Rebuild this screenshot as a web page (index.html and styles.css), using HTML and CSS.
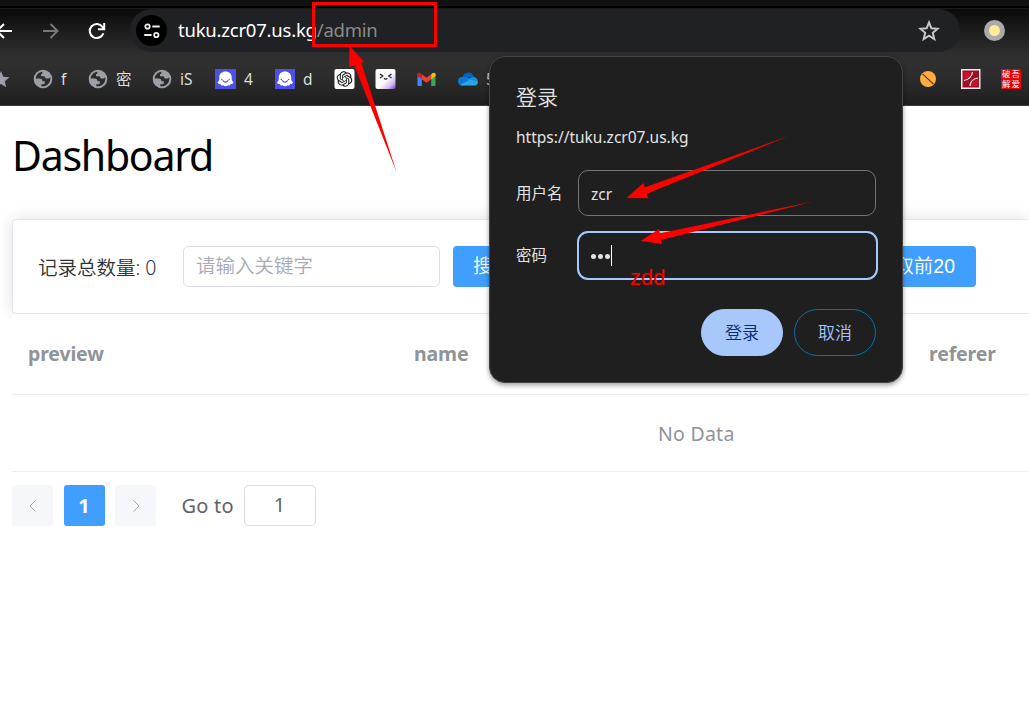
FILE: index.html
```html
<!DOCTYPE html>
<html lang="zh-CN">
<head>
<meta charset="utf-8">
<title>Dashboard</title>
<link rel="stylesheet" href="styles.css">
</head>
<body>
<svg class="defs" width="0" height="0">
  <symbol id="globe" viewBox="0 0 20 20">
    <circle cx="10" cy="10" r="9.3" fill="#9aa0a6"/>
    <path d="M9.500 2.700C5.500 3 3 6 2.700 9.600H6.500Q9.500 9.600 9.500 12.300H11.800V14.200Q11.800 15.200 10 15.200H8.300V17.200C13.500 18 17.300 14.200 17.300 10V8.200L15.800 9.500 12.800 9.500 11.500 7.300H8V5.200Q9.500 5.200 9.500 2.700Z" fill="#2c2c2c"/>
  </symbol>
  <symbol id="ghost" viewBox="0 0 20 20">
    <rect width="20" height="20" fill="#4d50e6"/>
    <path d="M10 2.6C6.4 2.6 3.8 5 3.8 8.2V11L2 13.5Q2.8 15.5 4.8 14.7 5.1 17.3 7.5 16.2 10 18.5 12.5 16.2 14.9 17.3 15.2 14.7 17.2 15.5 18 13.5L16.2 11V8.2C16.2 5 13.6 2.6 10 2.6Z" fill="#fff"/>
    <path d="M7.2 11.3Q10 15 12.8 11.3" fill="none" stroke="#4d50e6" stroke-width="1.1"/>
    <circle cx="6.3" cy="10.5" r=".7" fill="#4d50e6"/><circle cx="13.7" cy="10.5" r=".7" fill="#4d50e6"/>
  </symbol>
</svg>
<header class="browser">
  <div class="tabstrip"></div>
  <div class="toolbar">
    <svg class="nav back" viewBox="0 0 18 18"><path d="M17 9H2M9 2L2 9l7 7"/></svg>
    <svg class="nav forward" viewBox="0 0 18 18"><path d="M1 9h14M8.5 2l7 7-7 7"/></svg>
    <svg class="nav reload" viewBox="0 0 18 18"><path d="M15.4 11.2A7 7 0 1 1 14.5 5L16 7.2M16.2 1v6.2H10"/></svg>
    <div class="omnibox">
      <span class="site"><svg viewBox="0 0 18 18"><circle cx="4.5" cy="4.5" r="2.2"/><circle cx="13.3" cy="13" r="2.2"/><path d="M9.3 4.5h7.4M1.2 13h7.4"/></svg></span>
      <span class="url">tuku.zcr07.us.kg<span class="path">/admin</span></span>
      <svg class="fav" viewBox="0 0 22 22"><path d="M11 2.5l2.4 5.8 6.2.5-4.8 4 1.5 6.2L11 15.7 5.7 19l1.5-6.2-4.8-4 6.2-.5z"/></svg>
    </div>
    <span class="avatar"></span>
  </div>
  <nav class="bookmarks">
    <span class="bm"><svg class="star" viewBox="0 0 18 18"><path d="M9 1l2.3 5.7 6.2.5-4.7 4 1.4 6L9 14l-5.2 3.2 1.4-6-4.7-4 6.2-.5z" fill="#9aa0a6"/></svg></span>
    <span class="bm"><svg><use href="#globe"/></svg>f</span>
    <span class="bm"><svg><use href="#globe"/></svg>密</span>
    <span class="bm"><svg><use href="#globe"/></svg>iS</span>
    <span class="bm"><svg class="wide" viewBox="0 0 21 20"><rect width="21" height="20" fill="#4d50e6"/><use href="#ghost" width="21" height="20"/></svg>4</span>
    <span class="bm"><svg><use href="#ghost"/></svg>d</span>
    <span class="bm"><svg class="wide" viewBox="0 0 20 20"><rect width="20" height="20" rx="2" fill="#fff"/>
      <g transform="translate(2.2 2.2) scale(.65)"><path fill="#111" d="M22.28 9.82a5.98 5.98 0 0 0-.52-4.91 6.05 6.05 0 0 0-6.51-2.9A6.07 6.07 0 0 0 4.98 4.18a5.98 5.98 0 0 0-4 2.9 6.05 6.05 0 0 0 .74 7.1 5.98 5.98 0 0 0 .51 4.91 6.05 6.05 0 0 0 6.51 2.9A5.98 5.98 0 0 0 13.26 24a6.06 6.06 0 0 0 5.77-4.21 5.99 5.99 0 0 0 4-2.9 6.06 6.06 0 0 0-.75-7.07zm-9.02 12.61a4.48 4.48 0 0 1-2.88-1.04l.14-.08 4.78-2.76a.8.8 0 0 0 .39-.68v-6.74l2.02 1.17a.07.07 0 0 1 .04.05v5.58a4.5 4.5 0 0 1-4.49 4.5zM3.6 18.3a4.47 4.47 0 0 1-.53-3.01l.14.08 4.78 2.76a.77.77 0 0 0 .78 0l5.84-3.37v2.33a.08.08 0 0 1-.03.06L9.74 19.95A4.5 4.5 0 0 1 3.6 18.3zM2.34 7.9a4.49 4.49 0 0 1 2.37-1.97v5.68a.77.77 0 0 0 .38.67l5.82 3.36-2.02 1.17a.08.08 0 0 1-.07 0l-4.83-2.79A4.5 4.5 0 0 1 2.34 7.9zm16.6 3.85l-5.84-3.38 2.02-1.16a.08.08 0 0 1 .07 0l4.83 2.79a4.49 4.49 0 0 1-.68 8.1v-5.67a.79.79 0 0 0-.4-.68zm2.01-3.02l-.14-.09-4.77-2.78a.78.78 0 0 0-.79 0L9.41 9.23V6.9a.07.07 0 0 1 .03-.06l4.83-2.79a4.5 4.5 0 0 1 6.68 4.66zM8.31 12.86l-2.02-1.16a.08.08 0 0 1-.04-.06V6.07a4.5 4.5 0 0 1 7.38-3.45l-.14.08-4.78 2.76a.8.8 0 0 0-.39.68zm1.1-2.36l2.6-1.5 2.6 1.5v3l-2.6 1.5-2.6-1.5z"/></g></svg></span>
    <span class="bm"><svg class="wide" viewBox="0 0 20 20">
      <defs><linearGradient id="lilac" x1="0" y1="0" x2="1" y2="1"><stop offset=".55" stop-color="#fafafa"/><stop offset=".8" stop-color="#cdb8ee"/><stop offset="1" stop-color="#8738d6"/></linearGradient></defs>
      <rect width="20" height="20" rx="2" fill="url(#lilac)"/><path d="M4.5 5l2.7 2-2.7 2M16 5l-2.7 2L16 9M8.5 9.2Q10.2 11 11.9 9.2" fill="none" stroke="#1f2534" stroke-width="1.4"/></svg></span>
    <span class="bm"><svg class="wide" viewBox="0 0 20 20">
      <path d="M1 4.5V16q0 1 1 1h3.3V8z" fill="#4285f4"/><path d="M19 4.5V16q0 1-1 1h-3.3V8z" fill="#34a853"/>
      <path d="M5.3 5.2L10 8.8l4.7-3.6v5L10 13.8 5.3 10.2z" fill="#ea4335"/><path d="M14.7 5.2l1.4-1.1Q19 2.8 19 5.6V7l-4.3 3.3z" fill="#fbbc04"/><path d="M5.3 5.2L3.9 4.1Q1 2.8 1 5.6V7l4.3 3.3z" fill="#c5221f"/></svg></span>
    <span class="bm"><svg viewBox="0 0 20 20"><path d="M4.5 8.5Q5.5 3.8 10 3.6 14.5 3.5 16 8z" fill="#0364b8"/><path d="M0 12.5Q0 8.3 4.2 8.1L8 7.8 14 11 6 16.5H4Q.3 16.4 0 12.5z" fill="#0f78d4"/><path d="M9 10.2L15.5 7.8Q19.8 8.8 20 13L12 13z" fill="#1490df"/><path d="M2 15.8L12.5 10.6 20 13Q19.7 16.4 16.5 16.5H4Z" fill="#28a8ea"/></svg>5</span>
    <span class="bm"><svg class="small" viewBox="0 0 16 16"><circle cx="8" cy="8" r="8" fill="#ffab40"/><path d="M2.5 2.8L13.5 13.2" stroke="#51351b" stroke-width="1.1"/></svg></span>
    <span class="bm"><svg viewBox="0 0 20 20"><path d="M0 0h19.5v20H0z" fill="#f8e9ed"/><path d="M1.5 1.5H18v17H1.5z" fill="#9b1026"/><path d="M3 3h7q-1 6-7 7zM17 10v7h-7q0-6 7-7z" fill="#c7132f"/><path d="M3 11.5Q10.5 10 11.5 3M9 17Q9.5 10 17 9" fill="none" stroke="#f8e9ed" stroke-width="1.2"/></svg></span>
    <span class="bm"><span class="seal"><span>破吾</span><span>解爱</span></span></span>
  </nav>
</header>

<main class="page">
  <h1>Dashboard</h1>
  <section class="card">
    <span class="count">记录总数量: 0</span>
    <span class="keyword">请输入关键字</span>
    <span class="btn search">搜索</span>
    <span class="btn top">获取前20</span>
  </section>
  <div class="table">
    <div class="thead"><span>preview</span><span>name</span><span>referer</span></div>
    <div class="empty">No Data</div>
  </div>
  <div class="pager">
    <span class="pg"><svg viewBox="0 0 12 12"><path d="M8.5.5L3 6l5.5 5.5"/></svg></span>
    <span class="pg on">1</span>
    <span class="pg"><svg viewBox="0 0 12 12"><path d="M3.5.5L9 6l-5.5 5.5"/></svg></span>
    <span class="goto">Go to</span>
    <span class="jump">1</span>
  </div>
</main>

<div class="dialog">
  <div class="title">登录</div>
  <div class="origin">https://tuku.zcr07.us.kg</div>
  <div class="field"><span class="label">用户名</span><span class="input">zcr</span></div>
  <div class="field pass"><span class="label">密码</span><span class="input focus"><i></i><i></i><i></i><b></b></span></div>
  <div class="actions"><span class="action primary">登录</span><span class="action">取消</span></div>
</div>

<svg class="marks" width="1029" height="706" viewBox="0 0 1029 706">
  <rect x="313.5" y="3.5" width="122" height="42" fill="none" stroke="#f00" stroke-width="3"/>
  <g fill="#f00">
    <path d="M349.5 46L364 61.500 361.300 62.700 396.500 172 354.300 65.300 349 67Z"/>
    <path d="M626.5 198L643.300 183 645 187.300 789 136 646.700 193.700 648 198.300Z"/>
    <path d="M640.5 241L659 229 660 233.300 813 201.500 661 240 662 244Z"/>
  </g>
</svg>
<span class="note">zdd</span>
</body>
</html>
```
FILE: styles.css
```css
* { box-sizing: border-box; }
body {
  margin: 0;
  width: 1029px;
  height: 706px;
  overflow: hidden;
  position: relative;
  background: #fff;
  font-family: "Noto Sans", "Noto Sans CJK SC", sans-serif;
  white-space: nowrap;
}
.defs { position: absolute; }
svg { display: block; flex: none; }

.browser {
  height: 106px;
  background: linear-gradient(#0a0a0a 8px, #2e2e2e 54px, #303030 62px, #2b2b2b 80px, #1e1e1e 104px);
  border-bottom: 1px solid #3c3a3c;
}
.tabstrip { height: 8px; background: #121212; border-bottom: 2px solid #000; box-shadow: 0 1px #1c1c1c; }
.toolbar { height: 45px; display: flex; align-items: center; }
.nav { width: 18px; height: 18px; fill: none; stroke: #fff; stroke-width: 2; }
.back { margin-left: -5px; }
.forward { margin-left: 29px; stroke: #777; }
.reload { margin-left: 28px; }
.omnibox {
  width: 830px;
  height: 43px;
  margin-left: 24px;
  padding: 0 20px 0 6px;
  display: flex;
  align-items: center;
  border-radius: 22px;
  background: #202124;
}
.site { width: 31px; height: 31px; border-radius: 50%; background: #000; display: grid; place-items: center; }
.site svg { width: 18px; height: 18px; fill: none; stroke: #eee; stroke-width: 1.8; }
.url { margin: -2px 0 0 11px; font-size: 18.5px; line-height: 26px; color: #fff; letter-spacing: -0.22px; }
.path { color: #8b8b8b; }
.fav { width: 22px; height: 22px; margin-left: auto; fill: none; stroke: #c7c7c7; stroke-width: 2; }
.avatar { width: 21px; height: 21px; margin-left: 24px; border: 5px solid #aaa; border-radius: 50%; background: #ffeb99; }

.bookmarks {
  height: 52px;
  display: grid;
  grid-template-columns: 33px 55px 64px 63px 60px 59px 41px 41px 42px 462px 41px 40px 28px;
  align-items: center;
  color: #dedede;
  font-size: 15.5px;
  line-height: 22px;
}
.bm { display: flex; align-items: center; gap: 8px; }
.bm svg { width: 20px; height: 20px; }
.bm svg.wide { width: 21px; }
.bm svg.star { width: 18px; margin-left: -8px; }
.bm svg.small { width: 16px; height: 16px; }
.seal {
  width: 20px;
  height: 20px;
  display: grid;
  grid-template-rows: 10px 10px;
  background: #e80000;
  color: #fff;
  font-family: "Liberation Sans", "Noto Sans CJK SC", sans-serif;
  font-size: 8.5px;
  letter-spacing: 1px;
  line-height: 10px;
  padding-left: 1px;
}

.page { padding-left: 12px; overflow: hidden; }
h1 { margin: 0; height: 113px; padding-top: 20px; font-size: 41px; line-height: 58px; font-weight: 400; color: #000; letter-spacing: -1.25px; }
.card {
  height: 95px;
  padding: 0 25px;
  display: flex;
  align-items: center;
  border: 1px solid #e4e7ed;
  border-right: 0;
  border-radius: 4px 0 0 4px;
  box-shadow: 0 0 16px rgba(0, 0, 0, .12);
  color: #303133;
}
.count { width: 145px; font-size: 19.5px; }
.keyword {
  width: 257px;
  height: 41px;
  padding-left: 12px;
  line-height: 38px;
  border: 1px solid #dcdfe6;
  border-radius: 5px;
  color: #a8abb2;
  font-size: 19.5px;
}
.btn { height: 41px; padding: 0 20px; line-height: 40px; border-radius: 4px; background: #409eff; color: #fff; font-size: 19.5px; }
.search { width: 80px; margin-left: 13px; }
.top { width: 121px; padding-right: 21px; margin-left: 322px; display: flex; justify-content: flex-end; font-family: "Liberation Sans", "Noto Sans CJK SC", sans-serif; }
.count, .keyword, .btn, .title, .action { font-weight: 350; }

.table { position: relative; background: #fff; color: #909399; font-size: 19.5px; }
.thead {
  height: 81px;
  display: grid;
  grid-template-columns: 386px 515px 1fr;
  align-items: center;
  padding: 0 0 2px 16px;
  border-bottom: 1px solid #ebeef5;
  font-weight: 700;
  letter-spacing: -.15px;
}
.empty { height: 77px; padding-left: 646px; line-height: 78px; border-bottom: 1px solid #ebeef5; letter-spacing: .25px; }
.pager { height: 41px; margin-top: 13px; display: flex; align-items: center; color: #606266; font-size: 20px; }
.pg { width: 41px; height: 41px; margin-right: 10.5px; display: grid; place-items: center; border-radius: 3px; background: #f5f7fa; }
.pg svg { width: 12px; height: 12px; fill: none; stroke: #a8abb2; stroke-width: 1; }
.pg.on { background: #409eff; color: #fff; font-weight: 700; }
.goto { width: 62px; margin-left: 15px; letter-spacing: .2px; }
.jump { width: 72px; height: 41px; border: 1px solid #dcdfe6; border-radius: 5px; text-align: center; line-height: 37px; }

.dialog {
  position: absolute;
  left: 489px;
  top: 56px;
  width: 414px;
  height: 327px;
  padding: 24px 26px;
  border: 1px solid #454545;
  border-radius: 16px;
  background: #1f1f1f;
  box-shadow: 0 2px 5px rgba(0, 0, 0, .4);
  color: #e3e3e3;
}
.title { height: 34px; font-size: 21px; line-height: 32px; }
.origin { height: 55px; font-size: 15.5px; line-height: 44px; }
.field { height: 46px; display: flex; align-items: center; font-size: 15.5px; }
.label { flex: none; width: 62px; padding-bottom: 1px; }
.input { flex: none; width: 298px; height: 46px; padding: 2px 12px 0; border: 1px solid #757575; border-radius: 10px; display: flex; align-items: center; }
.pass { margin-top: 16px; }
.focus { width: 299px; height: 47px; outline: 2px solid #a8c7fa; outline-offset: -1px; gap: 2px; padding-top: 3px; }
.focus i { width: 5px; height: 5px; border-radius: 50%; background: #e3e3e3; }
.focus b { width: 1px; height: 21px; margin: -3px 0 0 -1px; background: #fff; }
.actions { margin-top: 31px; display: flex; justify-content: flex-end; gap: 11px; }
.action { width: 82px; height: 47px; border: 1px solid #0473a8; border-radius: 24px; text-align: center; line-height: 46px; font-size: 17px; color: #a8c7fa; }
.primary { border-color: #a8c7fa; background: #a8c7fa; color: #062e6f; }
.marks { position: absolute; left: 0; top: 0; }
.note { position: absolute; left: 630px; top: 264px; color: #f00; font-family: "Liberation Sans", sans-serif; font-size: 22px; line-height: 28px; }
```
